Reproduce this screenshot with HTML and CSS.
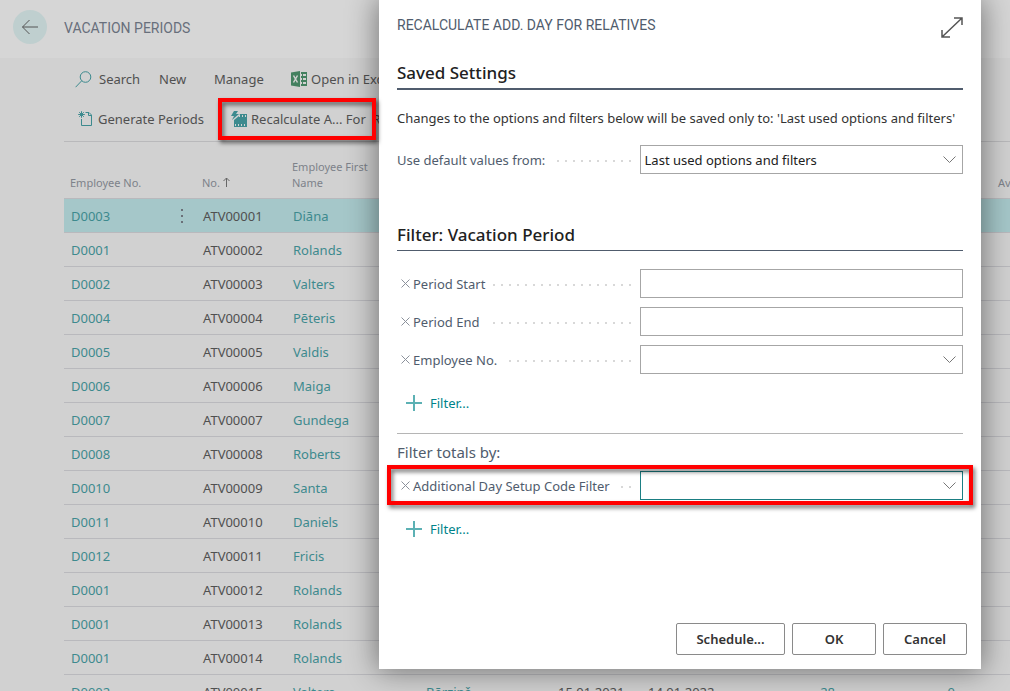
FILE: index.html
```html
<!DOCTYPE html>
<html lang="en">
<head>
<meta charset="utf-8">
<title>Vacation Periods</title>
<link rel="stylesheet" href="styles.css">
</head>
<body>
<div class="page">
  <header class="page-header">
    <button class="back" aria-label="Back"><svg width="18" height="16" viewBox="0 0 18 16"><path d="M8.500 1 1.500 8l7 7M1.500 8H17"/></svg></button>
    <h1 class="page-title">VACATION PERIODS</h1>
  </header>
  <main class="content">
    <div class="toolbar">
      <div class="tool-row tool-row-main">
        <button class="tool tool-search"><svg class="line-icon" width="17" height="17" viewBox="0 0 17 17"><circle cx="10.500" cy="6" r="5.300"/><path d="M6.700 9.800.6 16.200"/></svg>Search</button>
        <button class="tool tool-new">New</button>
        <button class="tool tool-manage">Manage</button>
        <button class="tool tool-excel"><svg width="16" height="16" viewBox="0 0 16 16"><path class="xl" d="M0 1.500 9 0v16l-9-1.500z"/><path class="xl" d="M10 1h6v14h-6z"/><path class="xl-cut" d="M10 3h1v2h-1zm2 0h3v2h-3zM10 7h1v2h-1zm2 0h3v2h-3zM10 11h1v2h-1zm2 0h3v2h-3z"/><path class="xl-x" d="m2.500 4.500 4 7m0-7-4 7"/></svg>Open in Excel</button>
      </div>
      <div class="tool-row tool-row-actions">
        <button class="tool tool-generate"><svg class="line-icon" width="15" height="16" viewBox="0 0 15 16"><path d="M7.500 1.500H11l2.500 2.500v10.500h-10v-6.500M10.500 1.500v3h3M3.500.2v6.600M.2 3.500h6.600M1.200 1.200l4.600 4.600M5.800 1.200 1.200 5.800"/></svg>Generate Periods</button>
        <button class="tool tool-recalc marked"><svg width="17" height="17" viewBox="0 0 17 17"><path class="film" d="M3 0h4L5 3h3L1 9l2-4H0z"/><path class="film" d="M9 3h7v13H3V9l5-4z"/><path class="film-cut" d="M8 4h1v2H8zm3 0h1v2h-1zm3 0h1v2h-1zM4 13h1v2H4zm3 0h1v2H7zm3 0h1v2h-1zm3 0h1v2h-1z"/></svg>Recalculate A... For &nbsp;Relatives</button>
      </div>
    </div>
    <table class="grid">
      <colgroup><col class="c-emp"><col class="c-dots"><col class="c-no"><col class="c-first"><col class="c-last"><col class="c-no"><col class="c-no"><col class="c-days"><col class="c-used"><col class="c-gap"><col></colgroup>
      <thead><tr><th>Employee No.</th><th></th><th>No. <svg class="sort" width="7" height="10" viewBox="0 0 7 10"><path d="M3.500 10V1M.5 4l3-3 3 3"/></svg></th><th class="two-line">Employee First Name</th><th></th><th></th><th></th><th></th><th></th><th></th><th>Av</th></tr></thead>
      <tbody>
        <tr class="selected"><td><a href="#">D0003</a></td><td><button class="more" aria-label="Row actions"><svg width="2" height="14" viewBox="0 0 2 14"><path d="M0 0h2v2H0zM0 6h2v2H0zM0 12h2v2H0z"/></svg></button></td><td>ATV00001</td><td><a href="#">Diāna</a></td><td colspan="7"></td></tr>
        <tr><td><a href="#">D0001</a></td><td></td><td>ATV00002</td><td><a href="#">Rolands</a></td><td colspan="7"></td></tr>
        <tr><td><a href="#">D0002</a></td><td></td><td>ATV00003</td><td><a href="#">Valters</a></td><td colspan="7"></td></tr>
        <tr><td><a href="#">D0004</a></td><td></td><td>ATV00004</td><td><a href="#">Pēteris</a></td><td colspan="7"></td></tr>
        <tr><td><a href="#">D0005</a></td><td></td><td>ATV00005</td><td><a href="#">Valdis</a></td><td colspan="7"></td></tr>
        <tr><td><a href="#">D0006</a></td><td></td><td>ATV00006</td><td><a href="#">Maiga</a></td><td colspan="7"></td></tr>
        <tr><td><a href="#">D0007</a></td><td></td><td>ATV00007</td><td><a href="#">Gundega</a></td><td colspan="7"></td></tr>
        <tr><td><a href="#">D0008</a></td><td></td><td>ATV00008</td><td><a href="#">Roberts</a></td><td colspan="7"></td></tr>
        <tr><td><a href="#">D0010</a></td><td></td><td>ATV00009</td><td><a href="#">Santa</a></td><td colspan="7"></td></tr>
        <tr><td><a href="#">D0011</a></td><td></td><td>ATV00010</td><td><a href="#">Daniels</a></td><td colspan="7"></td></tr>
        <tr><td><a href="#">D0012</a></td><td></td><td>ATV00011</td><td><a href="#">Fricis</a></td><td colspan="7"></td></tr>
        <tr><td><a href="#">D0001</a></td><td></td><td>ATV00012</td><td><a href="#">Rolands</a></td><td colspan="7"></td></tr>
        <tr><td><a href="#">D0001</a></td><td></td><td>ATV00013</td><td><a href="#">Rolands</a></td><td colspan="7"></td></tr>
        <tr><td><a href="#">D0001</a></td><td></td><td>ATV00014</td><td><a href="#">Rolands</a></td><td colspan="7"></td></tr>
        <tr><td><a href="#">D0002</a></td><td></td><td>ATV00015</td><td><a href="#">Valters</a></td><td><a href="#">Bērziņš</a></td><td>15.01.2021</td><td>14.01.2022</td><td class="num"><a href="#">28</a></td><td class="num"><a href="#">0</a></td><td></td><td></td></tr>
      </tbody>
    </table>
  </main>
</div>

<section class="dialog" role="dialog" aria-labelledby="dlg-title">
  <header class="dialog-header">
    <h2 class="dialog-title" id="dlg-title">RECALCULATE ADD. DAY FOR RELATIVES</h2>
    <button class="expand" aria-label="Expand"><svg width="22" height="21" viewBox="0 0 22 21"><path d="M1 20 21 1M13 1h8v7M1 13v7h8"/></svg></button>
  </header>
  <h3 class="section-title section-title-strong">Saved Settings</h3>
  <p class="note">Changes to the options and filters below will be saved only to: 'Last used options and filters'</p>
  <div class="field">
    <div class="caption"><label for="defaults">Use default values from:</label><span class="leader"></span></div>
    <div class="control"><select id="defaults"><option>Last used options and filters</option></select><svg class="chevron" width="13" height="7" viewBox="0 0 13 7"><path d="m.5.5 6 6 6-6"/></svg></div>
  </div>
  <h3 class="section-title section-title-filter">Filter: Vacation Period</h3>
  <div class="fields">
    <div class="field">
      <div class="caption"><button class="clear" aria-label="Remove Period Start"><svg width="9" height="9" viewBox="0 0 9 9"><path d="m.5.5 8 8m0-8-8 8"/></svg></button><label for="start">Period Start</label><span class="leader"></span></div>
      <div class="control"><input type="text" id="start"></div>
    </div>
    <div class="field">
      <div class="caption"><button class="clear" aria-label="Remove Period End"><svg width="9" height="9" viewBox="0 0 9 9"><path d="m.5.5 8 8m0-8-8 8"/></svg></button><label for="end">Period End</label><span class="leader"></span></div>
      <div class="control"><input type="text" id="end"></div>
    </div>
    <div class="field">
      <div class="caption"><button class="clear" aria-label="Remove Employee No."><svg width="9" height="9" viewBox="0 0 9 9"><path d="m.5.5 8 8m0-8-8 8"/></svg></button><label for="employee">Employee No.</label><span class="leader"></span></div>
      <div class="control"><select id="employee"><option></option></select><svg class="chevron" width="13" height="7" viewBox="0 0 13 7"><path d="m.5.5 6 6 6-6"/></svg></div>
    </div>
  </div>
  <button class="add"><svg width="16" height="16" viewBox="0 0 16 16"><path d="M8 0v16M0 8h16"/></svg>Filter...</button>
  <h4 class="totals-title">Filter totals by:</h4>
  <div class="field field-active">
    <div class="caption"><button class="clear" aria-label="Remove Additional Day Setup Code Filter"><svg width="9" height="9" viewBox="0 0 9 9"><path d="m.5.5 8 8m0-8-8 8"/></svg></button><label for="code">Additional Day Setup Code Filter</label><span class="leader"></span></div>
    <div class="control"><select id="code"><option></option></select><svg class="chevron" width="13" height="7" viewBox="0 0 13 7"><path d="m.5.5 6 6 6-6"/></svg></div>
  </div>
  <button class="add"><svg width="16" height="16" viewBox="0 0 16 16"><path d="M8 0v16M0 8h16"/></svg>Filter...</button>
  <footer class="actions">
    <button class="action action-wide">Schedule...</button>
    <button class="action">OK</button>
    <button class="action">Cancel</button>
  </footer>
</section>
</body>
</html>
```
FILE: styles.css
```css
*, *::after { box-sizing: border-box; }
body {
  margin: 0;
  font: 13px/20px "Noto Sans", "Open Sans", sans-serif;
  color: #505050;
  background: #d1d1d1;
}
button { padding: 0; border: 0; background: none; font: inherit; color: inherit; }
h1, h2, h3, h4, p { margin: 0; }
svg { display: block; flex: none; fill: none; stroke: currentColor; }
a { color: #3d8a8e; text-decoration: none; }

.page { height: 100vh; overflow: hidden; }
.page-header {
  display: flex;
  align-items: center;
  gap: 17px;
  height: 58px;
  padding: 0 13px 4px;
  background: #d6d6d6;
}
.back {
  display: grid;
  place-items: center;
  width: 34px;
  height: 34px;
  border-radius: 50%;
  background: #bfcfcf;
  color: #555;
}
.page-title, .dialog-title { font: 400 14px/20px Roboto, sans-serif; }
.page-title { color: #686f7c; padding-top: 2px; }

.content { padding-left: 64px; }
.toolbar { height: 84px; border-bottom: 1px solid #b9b9bb; }
.tool-row { display: flex; align-items: center; height: 40px; }
.tool { display: flex; align-items: center; white-space: nowrap; }
.tool-row-main { padding: 2px 0 0 11px; }
.tool-row-actions { padding: 2px 0 0 14px; }
.tool-search { width: 84px; gap: 7px; }
.tool-new { width: 55px; }
.tool-manage { width: 77px; }
.tool-excel { gap: 4px; }
.tool-recalc { width: 137px; gap: 3px; }
.tool-generate { gap: 5px; width: 153px; }
.line-icon { color: #3d8a8e; }
.xl { fill: #43805f; stroke: none; }
.xl-cut { fill: #d1d1d1; stroke: none; }
.xl-x { stroke: #d1d1d1; stroke-width: 1.500; }
.film { fill: #3d8a8e; stroke: none; }
.film-cut { fill: #d1d1d1; stroke: none; }

.marked, .field-active { position: relative; }
.marked::after, .field-active::after {
  content: "";
  position: absolute;
  border: 4px solid #f00;
  filter: drop-shadow(2px 3px 2px rgba(0, 0, 0, .55));
  pointer-events: none;
}
.marked::after { z-index: 3; inset: -11px -8px -11px -13px; }
.field-active::after { inset: -6px -10px -5px; }

.grid { width: 100%; table-layout: fixed; border-collapse: collapse; }
.c-emp { width: 104px; }
.c-dots { width: 28px; }
.c-no { width: 90px; }
.c-first { width: 133px; }
.c-last { width: 132px; }
.c-days { width: 111px; }
.c-used { width: 120px; }
.c-gap { width: 30px; }
.grid th {
  height: 56px;
  padding: 0 6px 7px;
  border-bottom: 1px solid #b9b9bd;
  font-size: 11px;
  line-height: 16px;
  font-weight: 400;
  text-align: left;
  vertical-align: bottom;
  color: #7d828a;
}
.grid .two-line { padding-right: 40px; }
.grid td { height: 34px; padding: 2px 7px 0; border-bottom: 1px solid #b9b9bd; white-space: nowrap; }
.grid .num { text-align: right; }
.selected td { background: #a5c7c9; }
.sort { display: inline-block; color: #666; }
.more { display: block; margin: auto; color: #6a7078; }
.more svg { fill: currentColor; stroke: none; }

.dialog {
  position: absolute;
  z-index: 2;
  top: 0;
  left: 379px;
  right: 29px;
  padding: 15px 18px 14px;
  background: #fff;
  box-shadow: 0 0 28px 2px rgba(0, 0, 0, .45);
  color: #333;
}
.dialog-header { display: flex; justify-content: space-between; align-items: flex-start; height: 45px; }
.dialog-title { color: #505c6d; }
.expand { padding-top: 2px; color: #555; }
.expand svg { stroke-width: 1.500; }
.section-title { font-size: 17px; line-height: 26px; font-weight: 500; color: #212121; }
.section-title-strong { padding-bottom: 2px; border-bottom: 2px solid #505c6d; }
.section-title-filter { margin: 48px 0 18px; padding-bottom: 2px; border-bottom: 1px solid #505c6d; }
.note { margin: 18px 0 17px; white-space: nowrap; }
.fields { display: grid; gap: 9px; }
.field { display: grid; grid-template-columns: 3fr 4fr; align-items: center; color: #505c6d; }
.caption { display: flex; align-items: center; white-space: nowrap; }
.clear { padding: 0 3px 0 4px; color: #8b919b; }
.leader {
  flex: 1;
  height: 2px;
  margin: 2px 9px 0 8px;
  background: repeating-linear-gradient(to left, #d8d8d8 0 2px, transparent 2px 8px);
}
.control { display: grid; align-items: center; }
.control > * { grid-area: 1 / 1; }
.control input, .control select {
  appearance: none;
  width: 100%;
  height: 29px;
  padding: 0 4px;
  border: 1px solid #a6a6a6;
  border-radius: 0;
  background: #fff;
  font: inherit;
  color: #212121;
}
.field-active .control select { border-color: #1b7f84; }
.chevron { justify-self: end; margin-right: 7px; color: #777; pointer-events: none; }
.add { display: flex; align-items: center; gap: 8px; margin: 19px 0 0 9px; color: #00838a; }
.add svg { color: #5cb1b4; stroke-width: 2; }
.totals-title {
  margin: 20px 0 9px;
  padding-top: 8px;
  border-top: 1px solid #b5b5b5;
  font-size: 15px;
  line-height: 20px;
  font-weight: 400;
  color: #505c6d;
}
.actions { display: flex; justify-content: flex-end; gap: 7px; margin: 84px -4px 0 0; }
.action {
  width: 84px;
  height: 32px;
  border: 1px solid #8a8a8a;
  border-radius: 2px;
  font-weight: 600;
  color: #333;
}
.action-wide { width: 109px; }
```
